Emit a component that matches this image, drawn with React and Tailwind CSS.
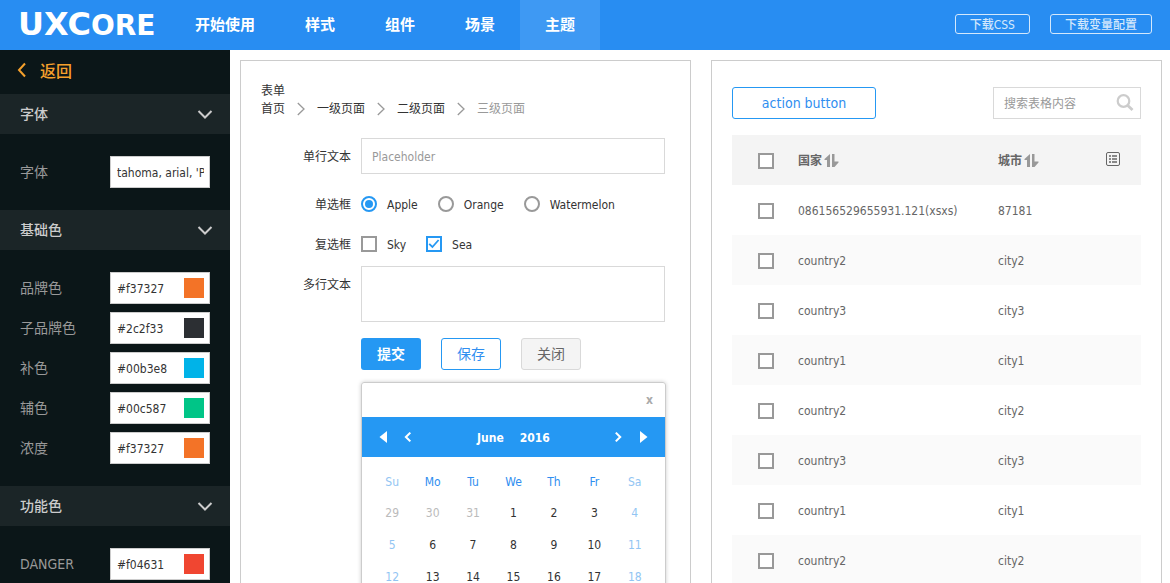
import React, { useState } from "react";

const NAV = ["开始使用", "样式", "组件", "场景", "主题"];

const SECTIONS = [
  { title: "字体", fields: [{ label: "字体", value: "tahoma, arial, 'PingFang SC'" }] },
  {
    title: "基础色",
    fields: [
      { label: "品牌色", value: "#f37327", color: true },
      { label: "子品牌色", value: "#2c2f33", color: true },
      { label: "补色", value: "#00b3e8", color: true },
      { label: "辅色", value: "#00c587", color: true },
      { label: "浓度", value: "#f37327", color: true },
    ],
  },
  { title: "功能色", fields: [{ label: "DANGER", value: "#f04631", color: true }] },
];

const ROWS = [
  ["086156529655931.121(xsxs)", "87181"],
  ["country2", "city2"],
  ["country3", "city3"],
  ["country1", "city1"],
  ["country2", "city2"],
  ["country3", "city3"],
  ["country1", "city1"],
  ["country2", "city2"],
];

const DAYS = ["Su", "Mo", "Tu", "We", "Th", "Fr", "Sa"];
const WEEKS = [
  [29, 30, 31, 1, 2, 3, 4],
  [5, 6, 7, 8, 9, 10, 11],
  [12, 13, 14, 15, 16, 17, 18],
];

const Chevron = ({ d, className, width = 2 }) => (
  <svg className={className} viewBox="0 0 16 16" fill="none" stroke="currentColor" strokeWidth={width}>
    <path d={d} />
  </svg>
);

const CheckBox = ({ label, defaultChecked }) => (
  <span className="grid shrink-0 w-4 h-4">
    <input
      type="checkbox"
      aria-label={label}
      defaultChecked={defaultChecked}
      className="peer col-start-1 row-start-1 appearance-none w-4 h-4 bg-white border-2 border-[#999] checked:border-[#2598f3]"
    />
    <svg
      className="col-start-1 row-start-1 w-4 h-4 pointer-events-none invisible peer-checked:visible text-[#2598f3]"
      viewBox="0 0 16 16"
      fill="none"
      stroke="currentColor"
      strokeWidth="1.8"
    >
      <path d="M3.2 7.8l3.2 3.2 6.200-7" />
    </svg>
  </span>
);

const Radio = ({ defaultChecked }) => (
  <input
    type="radio"
    name="fruit"
    defaultChecked={defaultChecked}
    className="appearance-none shrink-0 grid place-items-center w-4 h-4 rounded-full bg-white border-2 border-[#999] checked:border-[#2598f3] before:w-2 before:h-2 before:rounded-full checked:before:bg-[#2598f3]"
  />
);

const SortIcon = () => (
  <svg className="w-4 h-4" viewBox="0 0 16 16" fill="#999">
    <path d="M6 1v13H3V7H0.500V6z" />
    <path d="M8 1h2.500v7.500H14.500V9.500L10.500 14H8z" />
  </svg>
);

const Header = () => (
  <header className="flex items-center h-[50px] shrink-0 bg-[#288df2] text-white">
    <a
      href="#home"
      aria-label="UXCore"
      className="w-[170px] pl-[18px] text-[32px] leading-[50px] font-bold whitespace-nowrap font-['DejaVu_Sans',sans-serif]"
    >
      UXC<span className="text-[28px]">ORE</span>
    </a>
    <nav className="flex h-full">
      {NAV.map((item) => (
        <a
          key={item}
          href="#nav"
          className={`px-[25px] text-[15px] leading-[50px] font-bold ${item === "主题" ? "bg-[#3e99f3]" : ""}`}
        >
          {item}
        </a>
      ))}
    </nav>
    <div className="ml-auto mr-[18px] mb-0.5 flex gap-5">
      <button className="h-5 px-3.5 rounded-[3px] border border-[#d4e8fc] text-[#d4e8fc] text-xs leading-5 font-medium">下载CSS</button>
      <button className="h-5 px-3.5 rounded-[3px] border border-[#d4e8fc] text-[#d4e8fc] text-xs leading-5 font-medium">下载变量配置</button>
    </div>
  </header>
);

const Sidebar = () => (
  <aside className="w-[230px] shrink-0 overflow-hidden bg-[#0b1618]">
    <a href="#back" className="flex items-center h-11 pl-3.5 text-base font-medium text-[#f5a02c]">
      <Chevron d="M11 1.500L5 8l6 6.500" className="w-4 h-4 mr-2.5 mb-1" />
      返回
    </a>
    {SECTIONS.map((section) => (
      <section key={section.title}>
        <button className="flex items-center justify-between w-full h-10 pl-5 pr-[17px] bg-[#1b2527] text-sm font-medium text-[#ccc]">
          {section.title}
          <Chevron d="M1.500 5L8 11.500 14.500 5" className="w-4 h-4" />
        </button>
        <div className="flex flex-col gap-2 pl-5 pr-5 py-[22px]">
          {section.fields.map((f) => (
            <label key={f.label} className="flex items-center justify-between text-sm text-[#999]">
              {f.label}
              <span className="flex items-center w-[100px] h-8 px-[5px] bg-white border border-[#ccc]">
                <input type="text" defaultValue={f.value} className="flex-1 min-w-0 pl-px pt-0.5 text-xs text-[#333]" />
                {f.color && <span className="w-5 h-5 shrink-0" style={{ backgroundColor: f.value }} />}
              </span>
            </label>
          ))}
        </div>
      </section>
    ))}
  </aside>
);

const dayColor = (week, col, day) => {
  if (col === 0 && day < 20 || col === 6) return "text-[#92c5f3]";
  return week === 0 && day > 20 ? "text-[#bbb]" : "text-[#333]";
};

const Calendar = () => (
  <div className="rounded-[3px] border border-[#ccc] shadow-[0_0_4px_rgba(0,0,0,0.2)]">
    <div className="flex items-center h-[34px] pr-3">
      <button aria-label="clear" className="ml-auto text-xs font-bold text-[#aaa]">x</button>
    </div>
    <div className="flex items-center h-10 px-4 bg-[#2598f3] text-white">
      <button aria-label="previous year" className="mr-3">
        <svg className="w-3 h-3" viewBox="0 0 12 12" fill="currentColor"><path d="M9 0v12L1.500 6z" /></svg>
      </button>
      <button aria-label="previous month">
        <Chevron d="M9.500 3L4.500 8l5 5" className="w-3.5 h-3.5" width={2.4} />
      </button>
      <span className="mx-auto flex gap-4 pt-px text-xs font-bold">
        <span>June</span>
        <span>2016</span>
      </span>
      <button aria-label="next month">
        <Chevron d="M5.500 3l5 5-5 5" className="w-3.5 h-3.5" width={2.4} />
      </button>
      <button aria-label="next year" className="ml-3">
        <svg className="w-3 h-3" viewBox="0 0 12 12" fill="currentColor"><path d="M3 0v12L10.500 6z" /></svg>
      </button>
    </div>
    <div className="px-2.5 py-2">
      <table className="w-full table-fixed text-xs text-center">
        <thead>
          <tr className="h-8">
            {DAYS.map((d, i) => (
              <th key={d} className={`pt-0.5 font-normal ${i % 6 === 0 ? "text-[#92c5f3]" : "text-[#2f8ef0]"}`}>{d}</th>
            ))}
          </tr>
        </thead>
        <tbody>
          {WEEKS.map((week, w) => (
            <tr key={w} className="h-8">
              {week.map((day, col) => (
                <td key={day} className={dayColor(w, col, day)}>{day}</td>
              ))}
            </tr>
          ))}
        </tbody>
      </table>
    </div>
  </div>
);

const Crumb = ({ children }) => (
  <>
    <a href="#crumb">{children}</a>
    <svg className="w-2 h-4 mx-3" viewBox="0 0 8 16" fill="none" stroke="#999" strokeWidth="1.3">
      <path d="M.8 2L7 8 .8 14" />
    </svg>
  </>
);

const FormPanel = () => (
  <section className="flex-1 min-w-0 self-start border border-[#ccc] px-5 pt-[21px] pb-5 text-xs text-[#333]">
    <h2 className="leading-[18px]">表单</h2>
    <nav className="flex items-center h-[18px] leading-[18px]">
      <Crumb>首页</Crumb>
      <Crumb>一级页面</Crumb>
      <Crumb>二级页面</Crumb>
      <span className="text-[#999]">三级页面</span>
    </nav>
    <form className="mt-5 pr-1 grid grid-cols-[90px_1fr] gap-x-2.5" onSubmit={(e) => e.preventDefault()}>
      <label htmlFor="single" className="pt-px text-right leading-9">单行文本</label>
      <input
        id="single"
        type="text"
        placeholder="Placeholder"
        className="h-9 mr-px mb-2.5 px-2.5 pt-0.5 border border-[#d9d9d9] placeholder:text-[#999]"
      />
      <span className="pt-0.5 text-right leading-[38px]">单选框</span>
      <div className="flex items-center gap-5 h-10">
        <label className="flex items-center gap-2.5"><Radio defaultChecked /><span className="pt-0.5">Apple</span></label>
        <label className="flex items-center gap-2.5"><Radio /><span className="pt-0.5">Orange</span></label>
        <label className="flex items-center gap-2.5"><Radio /><span className="pt-0.5">Watermelon</span></label>
      </div>
      <span className="pt-0.5 text-right leading-[38px]">复选框</span>
      <div className="flex items-center gap-5 h-10">
        <label className="flex items-center gap-2.5"><CheckBox /><span className="pt-0.5">Sky</span></label>
        <label className="flex items-center gap-2.5"><CheckBox defaultChecked /><span className="pt-0.5">Sea</span></label>
      </div>
      <label htmlFor="multi" className="mt-0.5 pt-px text-right leading-9">多行文本</label>
      <textarea id="multi" className="mr-px mt-0.5 h-14 resize-none border border-[#d9d9d9]" />
      <div className="col-start-2 flex gap-5 mt-4 mb-3 text-sm">
        <button type="submit" className="w-[60px] h-8 rounded-[3px] bg-[#2598f3] font-bold text-white">提交</button>
        <button type="button" className="w-[60px] h-8 rounded-[3px] border border-[#2598f3] text-[#2f8ef0]">保存</button>
        <button type="button" className="w-[60px] h-8 rounded-[3px] border border-[#d9d9d9] bg-[#f4f4f4] text-[#666]">关闭</button>
      </div>
      <div className="col-start-2">
        <Calendar />
      </div>
    </form>
  </section>
);

const TablePanel = () => {
  const [keyword, setKeyword] = useState("");

  return (
    <section className="flex-1 min-w-0 self-start border border-[#ccc] px-5 pt-[26px] pb-5">
      <div className="flex justify-between mb-4">
        <button className="w-36 h-8 rounded-[3px] border border-[#2598f3] text-sm text-[#2f8ef0]">action button</button>
        <div className="flex items-center w-[148px] h-8 border border-[#d9d9d9] pl-2.5 pr-1.5">
          <input
            type="text"
            aria-label="搜索表格内容"
            placeholder="搜索表格内容"
            value={keyword}
            onChange={(e) => setKeyword(e.target.value)}
            className="flex-1 min-w-0 pt-0.5 text-xs placeholder:text-[#999]"
          />
          <button aria-label="search">
            <svg className="w-[18px] h-[18px]" viewBox="0 0 18 18" fill="none" stroke="#ccc" strokeWidth="2.200">
              <circle cx="7.500" cy="7" r="5.800" />
              <path d="M11.500 11.200L16.500 16" strokeWidth="2.800" />
            </svg>
          </button>
        </div>
      </div>
      <table className="w-full table-fixed text-left text-xs text-[#666]">
        <thead>
          <tr className="h-[50px] bg-[#f4f4f4]">
            <th className="w-[66px] pl-[26px] pt-0.5"><CheckBox label="select all" /></th>
            <th className="w-[200px] pt-0.5"><span className="flex items-center gap-0.5">国家<SortIcon /></span></th>
            <th className="pt-0.5"><span className="flex items-center gap-0.5">城市<SortIcon /></span></th>
            <th className="w-[35px]">
              <button aria-label="columns" className="block mb-0.5">
                <svg className="w-3.5 h-3.5" viewBox="0 0 14 14" fill="none" stroke="#666">
                  <rect x=".5" y=".5" width="13" height="13" rx="1.500" />
                  <path d="M3 4h2M6 4h5M3 7h2M6 7h5M3 10h2M6 10h5" strokeWidth="1.600" />
                </svg>
              </button>
            </th>
          </tr>
        </thead>
        <tbody>
          {ROWS.map(([country, city], i) => (
            <tr key={i} className="h-[50px] even:bg-[#fafafa]">
              <td className="pl-[26px] pt-0.5"><CheckBox label={country} /></td>
              <td className="pt-0.5">{country}</td>
              <td colSpan="2" className="pt-0.5">{city}</td>
            </tr>
          ))}
        </tbody>
      </table>
    </section>
  );
};

const App = () => (
  <div className="flex flex-col h-screen overflow-hidden bg-white font-['DejaVu_Sans_Condensed','Noto_Sans_CJK_SC',sans-serif]">
    <Header />
    <div className="flex flex-1 min-h-0">
      <Sidebar />
      <main className="flex flex-1 min-w-0 gap-5 pt-2.5 pl-2.5 pr-2 overflow-hidden">
        <FormPanel />
        <TablePanel />
      </main>
    </div>
  </div>
);

export default App;
